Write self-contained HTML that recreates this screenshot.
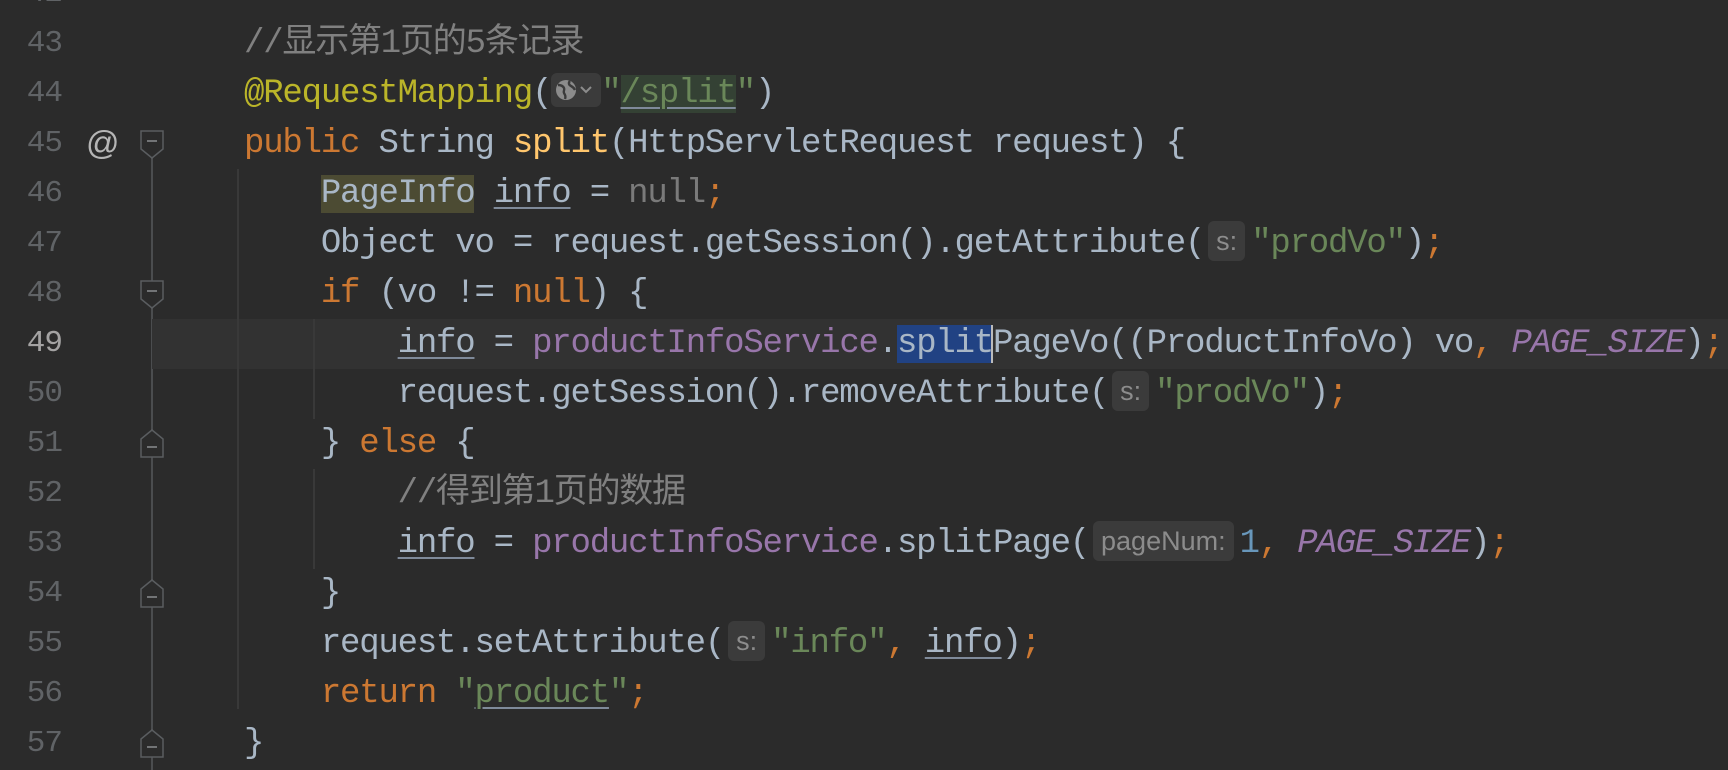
<!DOCTYPE html>
<html><head><meta charset="utf-8"><style>
html,body{margin:0;padding:0;}
body{width:1728px;height:770px;background:#2b2b2b;overflow:hidden;position:relative;font-family:"Liberation Mono","Noto Sans CJK SC",monospace;}
.vline{position:absolute;left:151px;top:150px;width:2px;height:620px;background:#4b4d4f;}
.cur{position:absolute;left:152px;top:319px;width:1576px;height:50px;background:#323232;}
.ln{position:absolute;left:0;width:62px;text-align:right;font-size:31px;letter-spacing:-1px;color:#606366;line-height:50px;}
.code{position:absolute;left:244px;font-size:34px;letter-spacing:-1.2px;line-height:50px;white-space:pre;color:#a9b7c6;}
.k{color:#cc7832}.f{color:#ffc66d}.a{color:#bbb529}.s{color:#6a8759}.p{color:#9876aa}.pi{color:#9876aa;font-style:italic}.n{color:#6897bb}.c{color:#808080}.g{color:#7a7a7a}
.u{text-decoration:underline;text-decoration-color:#7f8a9a;text-underline-offset:5px;text-decoration-thickness:2px}
.h{display:inline-block;background:#3b3b3b;color:#8c8c8c;font-family:"Liberation Sans",sans-serif;font-size:27px;letter-spacing:0;line-height:40px;height:40px;border-radius:6px;padding:0 8px;margin:0 6px 0 4px;vertical-align:2px}
.guide{position:absolute;width:2px;background:#393939;}
.fold{position:absolute;left:140px;width:24px;}
</style></head><body>
<div class="vline"></div>
<div class="cur"></div>
<div class="guide" style="left:237px;top:169px;height:540px"></div>
<div class="guide" style="left:313px;top:319px;height:100px"></div>
<div class="guide" style="left:313px;top:469px;height:100px"></div>

<div class="ln" style="top:-31px">42</div>
<div class="ln" style="top:19px">43</div>
<div class="ln" style="top:69px">44</div>
<div class="ln" style="top:119px">45</div>
<div class="ln" style="top:169px">46</div>
<div class="ln" style="top:219px">47</div>
<div class="ln" style="top:269px">48</div>
<div class="ln" style="top:319px;color:#a4a3a3">49</div>
<div class="ln" style="top:369px">50</div>
<div class="ln" style="top:419px">51</div>
<div class="ln" style="top:469px">52</div>
<div class="ln" style="top:519px">53</div>
<div class="ln" style="top:569px">54</div>
<div class="ln" style="top:619px">55</div>
<div class="ln" style="top:669px">56</div>
<div class="ln" style="top:719px">57</div>

<div style="position:absolute;left:86px;top:118px;line-height:50px;font-size:33px;color:#b5b5b5;font-family:'Liberation Sans',sans-serif">@</div>

<svg class="fold" style="top:130px" height="30" viewBox="0 0 24 30"><path d="M1 1H23V19L12 28L1 19Z" fill="#2b2b2b" stroke="#5a5d60" stroke-width="1.5"/><path d="M7 11H17" stroke="#8a8d90" stroke-width="1.5"/></svg>
<svg class="fold" style="top:280px" height="30" viewBox="0 0 24 30"><path d="M1 1H23V19L12 28L1 19Z" fill="#2b2b2b" stroke="#5a5d60" stroke-width="1.5"/><path d="M7 11H17" stroke="#8a8d90" stroke-width="1.5"/></svg>
<svg class="fold" style="top:428px" height="30" viewBox="0 0 24 30"><path d="M1 29H23V11L12 2L1 11Z" fill="#2b2b2b" stroke="#5a5d60" stroke-width="1.5"/><path d="M7 19H17" stroke="#8a8d90" stroke-width="1.5"/></svg>
<svg class="fold" style="top:578px" height="30" viewBox="0 0 24 30"><path d="M1 29H23V11L12 2L1 11Z" fill="#2b2b2b" stroke="#5a5d60" stroke-width="1.5"/><path d="M7 19H17" stroke="#8a8d90" stroke-width="1.5"/></svg>
<svg class="fold" style="top:728px" height="30" viewBox="0 0 24 30"><path d="M1 29H23V11L12 2L1 11Z" fill="#2b2b2b" stroke="#5a5d60" stroke-width="1.5"/><path d="M7 19H17" stroke="#8a8d90" stroke-width="1.5"/></svg>

<div class="code" style="top:19px"><span class="c">//显示第1页的5条记录</span></div>
<div class="code" style="top:69px"><span class="a">@RequestMapping</span>(<span style="display:inline-block;width:50px;height:34px;background:#3b3b3b;border-radius:6px;vertical-align:-5px"><svg width="50" height="34" viewBox="0 0 50 34"><circle cx="15" cy="17" r="10" fill="#8c8c8c"/><path d="M7 12c3 0 5 1 6 3s-1 3 0 5 2 3 1 6M19 8c-2 2-1 4 1 5s3 2 4 4" stroke="#3b3b3b" stroke-width="2.4" fill="none"/><path d="M30 14l5 5 5-5" stroke="#8c8c8c" stroke-width="2" fill="none"/></svg></span><span class="s">"</span><span class="s u" style="background:#344134">/split</span><span class="s">"</span>)</div>
<div class="code" style="top:119px"><span class="k">public</span> String <span class="f">split</span>(HttpServletRequest request) {</div>
<div class="code" style="top:169px">    <span style="background:#4c4b33">PageInfo</span> <span class="u">info</span> = <span class="g">null</span><span class="k">;</span></div>
<div class="code" style="top:219px">    Object vo = request.getSession().getAttribute(<span class="h">s:</span><span class="s">"prodVo"</span>)<span class="k">;</span></div>
<div class="code" style="top:269px">    <span class="k">if</span> (vo != <span class="k">null</span>) {</div>
<div class="code" style="top:319px">        <span class="u">info</span> = <span class="p">productInfoService</span>.<span style="background:#214283">split</span><span style="border-left:2px solid #bbbbbb;margin-left:-2px"></span>PageVo((ProductInfoVo) vo<span class="k">,</span> <span class="pi">PAGE_SIZE</span>)<span class="k">;</span></div>
<div class="code" style="top:369px">        request.getSession().removeAttribute(<span class="h">s:</span><span class="s">"prodVo"</span>)<span class="k">;</span></div>
<div class="code" style="top:419px">    } <span class="k">else</span> {</div>
<div class="code" style="top:469px">        <span class="c">//得到第1页的数据</span></div>
<div class="code" style="top:519px">        <span class="u">info</span> = <span class="p">productInfoService</span>.splitPage(<span class="h">pageNum:</span><span class="n">1</span><span class="k">,</span> <span class="pi">PAGE_SIZE</span>)<span class="k">;</span></div>
<div class="code" style="top:569px">    }</div>
<div class="code" style="top:619px">    request.setAttribute(<span class="h">s:</span><span class="s">"info"</span><span class="k">,</span> <span class="u">info</span>)<span class="k">;</span></div>
<div class="code" style="top:669px">    <span class="k">return</span> <span class="s">"</span><span class="s u">product</span><span class="s">"</span><span class="k">;</span></div>
<div class="code" style="top:719px">}</div>
</body></html>
